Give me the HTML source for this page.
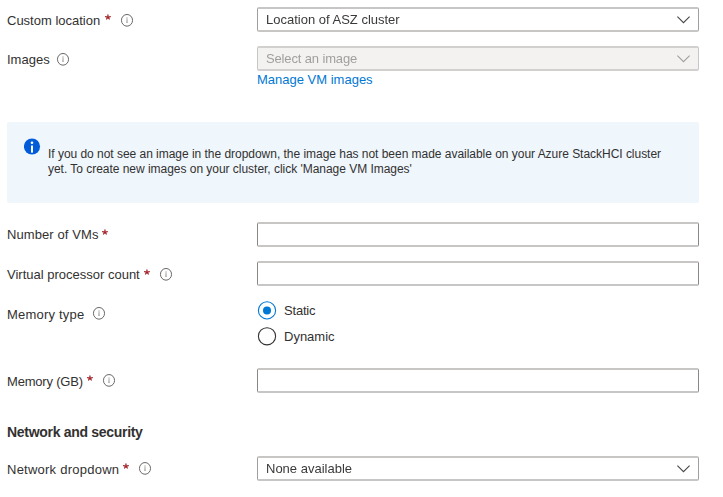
<!DOCTYPE html>
<html>
<head>
<meta charset="utf-8">
<style>
html,body{margin:0;padding:0;background:#fff;}
body{width:723px;height:497px;position:relative;overflow:hidden;font-family:"Liberation Sans",sans-serif;color:#323130;}
.gs{will-change:transform;}
.t{position:absolute;white-space:nowrap;font-size:13px;line-height:16px;height:16px;}
.ast{position:absolute;width:12px;height:12px;overflow:visible;}
.info{position:absolute;width:14px;height:14px;}
.box{position:absolute;left:257px;width:440px;height:21px;border-style:solid;border-width:2px 1px;border-color:#c8c6c4 #a19f9d;border-radius:2px;background:#fff;box-sizing:content-box;}
.box.tb{border-color:#c8c6c4 #8a8886;}
.box.dis{background:#f3f2f1;border-color:#d2d0ce #c8c6c4;}
.chev{position:absolute;left:676px;width:15px;height:9px;}
.radio{position:absolute;left:257px;width:20px;height:20px;}
</style>
</head>
<body>
<svg width="0" height="0" style="position:absolute"><defs><linearGradient id="ig" x1="0" y1="0" x2="0" y2="1"><stop offset="0" stop-color="#c8c6c4"/><stop offset="1" stop-color="#797775"/></linearGradient></defs></svg>

<!-- Row 1: Custom location -->
<div class="t" style="left:7px;top:13px;">Custom location</div>
<svg class="ast" style="left:102px;top:11px;" viewBox="0 0 12 12"><g stroke="#a4262c" stroke-width="1.3" stroke-linecap="round"><line x1="5.95" y1="6.4" x2="5.95" y2="4.0"/><line x1="5.95" y1="6.4" x2="3.6" y2="5.6"/><line x1="5.95" y1="6.4" x2="8.3" y2="5.6"/><line x1="5.95" y1="6.4" x2="4.65" y2="7.95"/><line x1="5.95" y1="6.4" x2="7.25" y2="7.95"/></g></svg>
<svg class="info" style="left:120px;top:13px;" viewBox="0 0 14 14"><ellipse cx="7" cy="7.32" rx="5.55" ry="5.85" fill="none" stroke="#6b6967" stroke-width="1"/><rect x="6.5" y="3.97" width="1" height="6" fill="url(#ig)"/></svg>
<div class="box" style="top:7px;"></div>
<div class="t gs" style="left:266px;top:12px;color:#3b3a39;">Location of ASZ cluster</div>
<svg class="chev" style="top:15px;" viewBox="0 0 15 9"><polyline points="1.4,1.6 7.5,7.7 13.6,1.6" fill="none" stroke="#484644" stroke-width="1.1"/></svg>

<!-- Row 2: Images -->
<div class="t" style="left:7px;top:52px;">Images</div>
<svg class="info" style="left:56px;top:52px;" viewBox="0 0 14 14"><ellipse cx="7" cy="7.32" rx="5.55" ry="5.85" fill="none" stroke="#6b6967" stroke-width="1"/><rect x="6.5" y="3.97" width="1" height="6" fill="url(#ig)"/></svg>
<div class="box dis" style="top:46px;"></div>
<div class="t gs" style="left:266px;top:51px;color:#a19f9d;letter-spacing:-0.14px;">Select an image</div>
<svg class="chev" style="top:54px;" viewBox="0 0 15 9"><polyline points="1.4,1.6 7.5,7.7 13.6,1.6" fill="none" stroke="#a19f9d" stroke-width="1.1"/></svg>
<div class="t" style="left:257px;top:72px;color:#0078d4;">Manage VM images</div>

<!-- Info box -->
<div style="position:absolute;left:7px;top:122px;width:692px;height:81px;background:#eff6fc;border-radius:2px;"></div>
<svg style="position:absolute;left:24px;top:138px;width:17px;height:17px;" viewBox="0 0 17 17"><circle cx="8" cy="8.45" r="8.05" fill="#015cda"/><circle cx="8" cy="4.8" r="1.3" fill="#fff"/><rect x="7" y="7.5" width="2" height="7.1" fill="#fff"/></svg>
<div class="t" style="left:48px;top:147px;font-size:12px;line-height:15px;height:30px;letter-spacing:-0.03px;">If you do not see an image in the dropdown, the image has not been made available on your Azure StackHCI cluster<br>yet. To create new images on your cluster, click 'Manage VM Images'</div>

<!-- Number of VMs -->
<div class="t" style="left:7px;top:227px;letter-spacing:0.09px;">Number of VMs</div>
<svg class="ast" style="left:99px;top:226px;" viewBox="0 0 12 12"><g stroke="#a4262c" stroke-width="1.3" stroke-linecap="round"><line x1="5.95" y1="6.4" x2="5.95" y2="4.0"/><line x1="5.95" y1="6.4" x2="3.6" y2="5.6"/><line x1="5.95" y1="6.4" x2="8.3" y2="5.6"/><line x1="5.95" y1="6.4" x2="4.65" y2="7.95"/><line x1="5.95" y1="6.4" x2="7.25" y2="7.95"/></g></svg>
<div class="box tb" style="top:222px;"></div>

<!-- Virtual processor count -->
<div class="t" style="left:7px;top:267px;">Virtual processor count</div>
<svg class="ast" style="left:141px;top:266px;" viewBox="0 0 12 12"><g stroke="#a4262c" stroke-width="1.3" stroke-linecap="round"><line x1="5.95" y1="6.4" x2="5.95" y2="4.0"/><line x1="5.95" y1="6.4" x2="3.6" y2="5.6"/><line x1="5.95" y1="6.4" x2="8.3" y2="5.6"/><line x1="5.95" y1="6.4" x2="4.65" y2="7.95"/><line x1="5.95" y1="6.4" x2="7.25" y2="7.95"/></g></svg>
<svg class="info" style="left:159px;top:267px;" viewBox="0 0 14 14"><ellipse cx="7" cy="7.32" rx="5.55" ry="5.85" fill="none" stroke="#6b6967" stroke-width="1"/><rect x="6.5" y="3.97" width="1" height="6" fill="url(#ig)"/></svg>
<div class="box tb" style="top:261px;"></div>

<!-- Memory type -->
<div class="t" style="left:7px;top:307px;letter-spacing:0.2px;">Memory type</div>
<svg class="info" style="left:92px;top:306px;" viewBox="0 0 14 14"><ellipse cx="7" cy="7.32" rx="5.55" ry="5.85" fill="none" stroke="#6b6967" stroke-width="1"/><rect x="6.5" y="3.97" width="1" height="6" fill="url(#ig)"/></svg>
<svg class="radio" style="top:300px;" viewBox="0 0 20 20"><circle cx="10" cy="10.4" r="8.6" fill="none" stroke="#0078d4" stroke-width="1.1"/><circle cx="10" cy="10.4" r="4" fill="#0078d4"/></svg>
<div class="t" style="left:284px;top:303px;letter-spacing:-0.2px;">Static</div>
<svg class="radio" style="top:326px;" viewBox="0 0 20 20"><circle cx="10" cy="10.3" r="8.6" fill="none" stroke="#323130" stroke-width="1.1"/></svg>
<div class="t" style="left:284px;top:329px;">Dynamic</div>

<!-- Memory (GB) -->
<div class="t" style="left:7px;top:374px;letter-spacing:-0.2px;">Memory (GB)</div>
<svg class="ast" style="left:84px;top:372px;" viewBox="0 0 12 12"><g stroke="#a4262c" stroke-width="1.3" stroke-linecap="round"><line x1="5.95" y1="6.4" x2="5.95" y2="4.0"/><line x1="5.95" y1="6.4" x2="3.6" y2="5.6"/><line x1="5.95" y1="6.4" x2="8.3" y2="5.6"/><line x1="5.95" y1="6.4" x2="4.65" y2="7.95"/><line x1="5.95" y1="6.4" x2="7.25" y2="7.95"/></g></svg>
<svg class="info" style="left:102px;top:373px;" viewBox="0 0 14 14"><ellipse cx="7" cy="7.40" rx="5.55" ry="5.85" fill="none" stroke="#6b6967" stroke-width="1"/><rect x="6.5" y="4.05" width="1" height="6" fill="url(#ig)"/></svg>
<div class="box tb" style="top:368px;"></div>

<!-- Network and security -->
<div class="t" style="left:7px;top:424px;font-size:14px;font-weight:bold;letter-spacing:-0.3px;">Network and security</div>

<!-- Network dropdown -->
<div class="t" style="left:7px;top:462px;letter-spacing:0.24px;">Network dropdown</div>
<svg class="ast" style="left:120px;top:460px;" viewBox="0 0 12 12"><g stroke="#a4262c" stroke-width="1.3" stroke-linecap="round"><line x1="5.95" y1="6.4" x2="5.95" y2="4.0"/><line x1="5.95" y1="6.4" x2="3.6" y2="5.6"/><line x1="5.95" y1="6.4" x2="8.3" y2="5.6"/><line x1="5.95" y1="6.4" x2="4.65" y2="7.95"/><line x1="5.95" y1="6.4" x2="7.25" y2="7.95"/></g></svg>
<svg class="info" style="left:138px;top:461px;" viewBox="0 0 14 14"><ellipse cx="7" cy="7.40" rx="5.55" ry="5.85" fill="none" stroke="#6b6967" stroke-width="1"/><rect x="6.5" y="4.05" width="1" height="6" fill="url(#ig)"/></svg>
<div class="box" style="top:456px;"></div>
<div class="t gs" style="left:266px;top:461px;color:#3b3a39;">None available</div>
<svg class="chev" style="top:464px;" viewBox="0 0 15 9"><polyline points="1.4,1.6 7.5,7.7 13.6,1.6" fill="none" stroke="#484644" stroke-width="1.1"/></svg>

</body>
</html>
